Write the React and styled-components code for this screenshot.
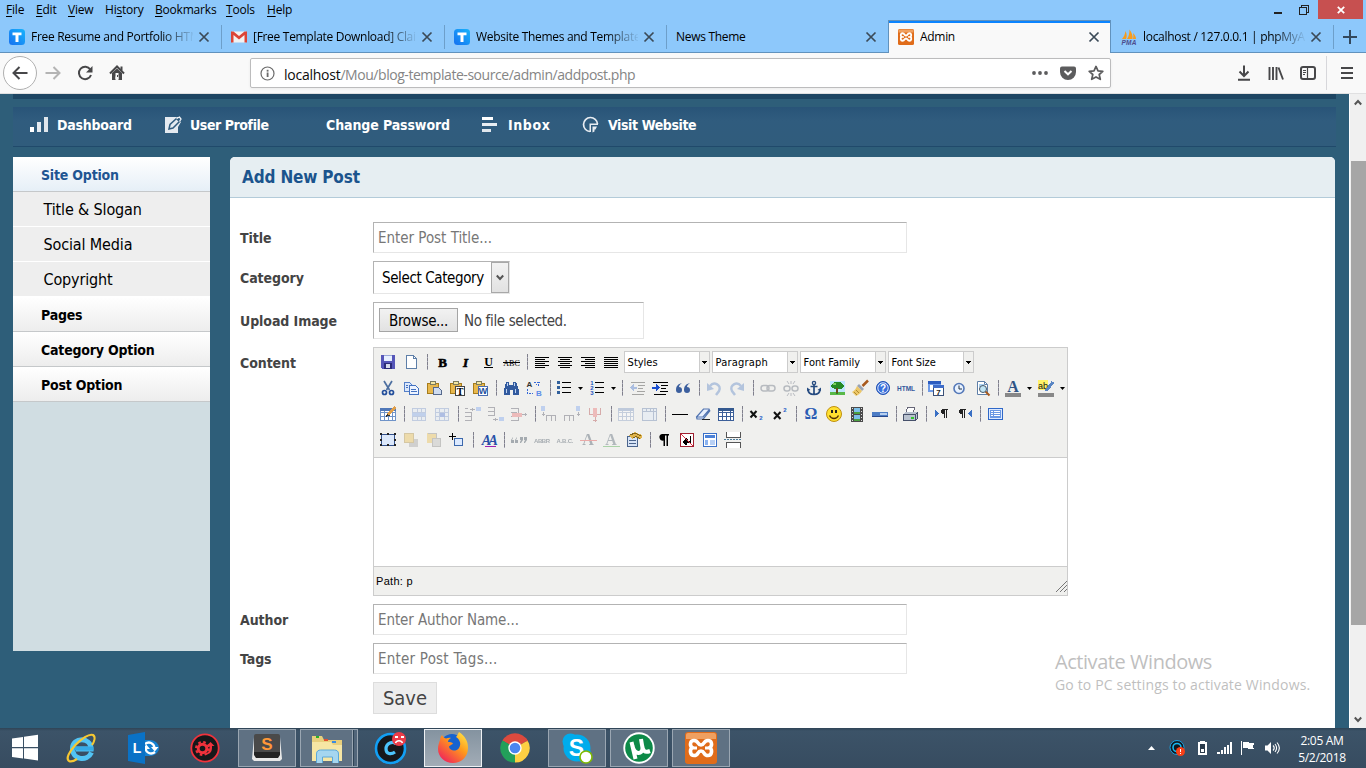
import React from "react";
import styled, { createGlobalStyle, css } from "styled-components";

const Global = createGlobalStyle`
  * { box-sizing: border-box; }
  html, body { margin: 0; padding: 0; overflow: hidden; }
  svg { display: block; flex: none; }
`;

const segoe = `"Open Sans", "Noto Sans", sans-serif`;
const tahoma = `"DejaVu Sans Condensed", "DejaVu Sans", sans-serif`;

const Text = styled.span`
  white-space: pre;
  flex: none;
  letter-spacing: ${(p) => p.$ls || 0}px;
`;

const Screen = styled.div`
  width: 1366px;
  height: 768px;
  display: flex;
  flex-direction: column;
  overflow: hidden;
  font-family: ${segoe};
  font-size: 12px;
  color: #000;
`;

/* ---------- browser chrome ---------- */

const MenuBar = styled.div`
  height: 20px;
  background: #8dc8fb;
  display: flex;
  justify-content: space-between;
  padding-left: 6px;
`;
const Menus = styled.div`
  display: flex;
  align-items: flex-start;
`;
const MenuItem = styled.span`
  width: ${(p) => p.$w}px;
  line-height: 19px;
  letter-spacing: -0.2px;
  u { text-underline-offset: 2px; }
`;
const WindowButtons = styled.div`
  display: flex;
  height: 19px;
`;
const WindowButton = styled.div`
  width: ${(p) => p.$w}px;
  height: 19px;
  display: flex;
  align-items: center;
  justify-content: center;
  background: ${(p) => p.$bg || "transparent"};
`;

const TabStrip = styled.div`
  height: 33px;
  display: flex;
  background: #8dc8fb;
  box-shadow: inset 0 -1px #6192bd;
`;
const Tab = styled.div`
  width: ${(p) => p.$w}px;
  height: 33px;
  flex: none;
  display: flex;
  align-items: center;
  padding: 1px 12px 0 ${(p) => p.$pl ?? 9}px;
  position: relative;
  ${(p) =>
    p.$active
      ? css`
          background: #f9f9f9;
          border: solid #6192bd;
          border-width: 1px 1px 0;
          box-shadow: inset 0 2px #0a84ff;
          padding-top: 0;
          padding-right: 10px;
        `
      : css`
          background: linear-gradient(#6d9fca, #6d9fca) right 5px / 1px 24px no-repeat;
          ${p.$last && "background: none; padding-right: 11px;"}
        `}
`;
const TabTitle = styled.div`
  flex: 1;
  min-width: 0;
  margin: 0 5px 1px ${(p) => (p.$icon ? 6 : 0)}px;
  overflow: hidden;
  white-space: nowrap;
  letter-spacing: ${(p) => p.$ls || 0}px;
  mask-image: ${(p) => (p.$fade ? "linear-gradient(90deg,#000 80%,transparent 101%)" : "none")};
`;
const NewTab = styled.div`
  flex: 1;
  display: flex;
  align-items: center;
  justify-content: center;
  background: linear-gradient(#6d9fca, #6d9fca) left 5px / 1px 24px no-repeat;
`;

const NavBar = styled.div`
  height: 41px;
  background: #f9f9f9;
  border-bottom: 1px solid #e0e0e1;
  display: flex;
  align-items: center;
  padding-left: 3px;
`;
const BackButton = styled.div`
  width: 34px;
  height: 34px;
  border: 1px solid #b0b0b0;
  border-radius: 50%;
  background: #fff;
  display: flex;
  align-items: center;
  justify-content: center;
`;
const NavButton = styled.div`
  width: ${(p) => p.$w || 32}px;
  display: flex;
  justify-content: center;
`;
const UrlBar = styled.div`
  width: 861px;
  height: 30px;
  margin-left: 117px;
  border: 1px solid #bcbcbd;
  border-radius: 2px;
  background: #fff;
  display: flex;
  align-items: center;
  padding: 0 6px 0 9px;
  box-shadow: 0 1px 3px rgba(0, 0, 0, 0.06);
`;
const Url = styled.div`
  flex: 1;
  margin-left: 9px;
  font-size: 14px;
  letter-spacing: -0.45px;
  color: #858585;
  padding-top: 2px;
  b { font-weight: 400; color: #0c0c0d; letter-spacing: -0.25px; }
`;
const UrlIcons = styled.div`
  display: flex;
  gap: 12px;
  align-items: center;
`;
const RightTools = styled.div`
  margin-left: 117px;
  display: flex;
  align-items: center;
`;
const MenuButton = styled.div`
  height: 34px;
  width: 40px;
  margin-left: 2px;
  border-left: 1px solid #d7d7db;
  display: flex;
  align-items: center;
  justify-content: center;
`;

/* ---------- page ---------- */

const Viewport = styled.div`
  height: 634px;
  display: flex;
  background: #2e5e79;
  font-family: ${tahoma};
`;
const Page = styled.div`
  width: 1336px;
  padding-left: 13px;
  margin-right: 13px;
  display: flex;
  flex-direction: column;
`;
const HeaderBand = styled.div`
  height: 5px;
  background: #1e4663;
`;
const SiteNav = styled.div`
  margin-top: 8px;
  height: 40px;
  background: linear-gradient(#295478, #305c7e 35%, #305c7c);
  border-bottom: 1px solid #204a6b;
  display: flex;
`;
const SiteNavItem = styled.div`
  display: flex;
  align-items: center;
  width: ${(p) => p.$w}px;
  padding: 0 0 4px ${(p) => p.$pl || 0}px;
  gap: ${(p) => p.$gap || 7}px;
  color: #fff;
  font-weight: 700;
  font-size: 14px;
`;
const Columns = styled.div`
  flex: 1;
  margin-top: 10px;
  display: flex;
  gap: 20px;
`;
const Sidebar = styled.div`
  width: 197px;
  height: 494px;
  background: #d0dde2;
`;
const SideHead = styled.div`
  height: 35px;
  padding-left: 28px;
  line-height: 36px;
  letter-spacing: -0.2px;
  font-size: 14px;
  font-weight: 700;
  color: ${(p) => (p.$open ? "#1f5592" : "#000")};
  background: linear-gradient(#fff, ${(p) => (p.$open ? "#e6eff7" : "#ededed")});
  border-bottom: 1px solid #c5c8ca;
`;
const SideLink = styled.div`
  height: 35px;
  padding-left: 30.5px;
  line-height: 35px;
  letter-spacing: -0.14px;
  font-size: 16px;
  background: #eee;
  border-bottom: 1px solid #fff;
`;
const Panel = styled.div`
  width: 1105px;
  background: #fff;
  border-radius: 5px 5px 0 0;
  overflow: hidden;
`;
const PanelTitle = styled.div`
  height: 41px;
  background: #e6eef2;
  border-bottom: 1px solid #b3cbd9;
  color: #1b548d;
  font-weight: 700;
  font-size: 17px;
  letter-spacing: -0.17px;
  line-height: 40px;
  padding-left: 12px;
`;
const Form = styled.div`
  padding: 24px 0 0 10px;
  display: flex;
  flex-direction: column;
  gap: 8px;
  color: #444;
  font-size: 15px;
`;
const Row = styled.div`
  display: flex;
  align-items: ${(p) => (p.$top ? "flex-start" : "center")};
  height: ${(p) => p.$h}px;
`;
const FieldLabel = styled.div`
  width: 133px;
  padding-top: ${(p) => (p.$top ? 8 : 1)}px;
  font-weight: 700;
  font-size: 14px;
  letter-spacing: -0.08px;
  white-space: nowrap;
`;
const Field = styled.div`
  width: ${(p) => p.$w || 534}px;
  height: 100%;
  border: 1px solid;
  border-color: #b3b3b3 #e6e6e6 #e6e6e6 #b3b3b3;
  display: flex;
  align-items: center;
  padding-left: 4px;
  color: #777;
`;
const SelectField = styled(Field)`
  padding: 0 0 0 8px;
  justify-content: space-between;
  color: #000;
`;
const SelectArrow = styled.div`
  width: 18px;
  height: 31px;
  border: 1px solid #a8a8a8;
  background: linear-gradient(#f2f2f2, #e2e2e2);
  display: flex;
  align-items: center;
  justify-content: center;
`;
const FileField = styled(Field)`
  padding-left: 5px;
  gap: 6px;
  color: #444;
`;
const Browse = styled.div`
  width: 79px;
  height: 24px;
  margin-bottom: 1px;
  padding-top: 1px;
  border: 1px solid #a5a5a5;
  background: linear-gradient(#f2f2f2, #e2e2e2);
  color: #000;
  display: flex;
  align-items: center;
  justify-content: center;
`;
const Save = styled.div`
  width: 64px;
  height: 32px;
  border: 1px solid #ddd;
  background: #eee;
  font-size: 20px;
  color: #444;
  display: flex;
  align-items: center;
  justify-content: center;
`;

/* ---------- rich text editor ---------- */

const Editor = styled.div`
  width: 695px;
  height: 249px;
  border: 1px solid #ccc;
  display: flex;
  flex-direction: column;
  color: #000;
`;
const ToolArea = styled.div`
  height: 110px;
  background: #f0f0ee;
  border-bottom: 1px solid #ccc;
  padding: 1px 0 0 3px;
`;
const ToolRow = styled.div`
  height: 26px;
  display: flex;
  align-items: center;
`;
const Tool = styled.div`
  width: ${(p) => (p.$split ? 32.5 : 23)}px;
  display: flex;
  align-items: center;
  padding-left: 1px;
  opacity: ${(p) => (p.$off ? 0.36 : 1)};
`;
const ToolSep = styled.div`
  width: 7.8px;
  height: 16px;
  padding-left: 4px;
  &::before {
    content: "";
    display: block;
    width: 1px;
    height: 16px;
    background: repeating-linear-gradient(#80808c 0 3px, #a8a8b8 3px 4px);
  }
`;
const ListBox = styled.div`
  width: 86px;
  height: 22px;
  margin: 0 1px;
  border: 1px solid #ccc;
  background: #fff;
  display: flex;
  justify-content: space-between;
  font-size: 11px;
  line-height: 21px;
  padding-left: 3px;
`;
const ListArrow = styled.div`
  width: 10px;
  background: #f0f0ee;
  border-left: 1px solid #ccc;
  display: flex;
  align-items: center;
  justify-content: center;
`;
const EditArea = styled.div`
  flex: 1;
  background: #fff;
`;
const StatusBar = styled.div`
  height: 29px;
  background: #f0f0ee;
  border-top: 1px solid #ccc;
  display: flex;
  align-items: center;
  justify-content: space-between;
  padding-left: 2px;
  font: 11px "Liberation Sans", sans-serif;
`;
const Grip = styled.div`
  align-self: flex-end;
  padding: 0 0 3px;
`;

/* ---------- scrollbar, watermark, task bar ---------- */

const Scroll = styled.div`
  width: 17px;
  background: #f0f0f0;
  display: flex;
  flex-direction: column;
  align-items: center;
  justify-content: space-between;
  border-left: 1px solid #fff;
`;
const ScrollEnd = styled.div`
  height: 17px;
  display: flex;
  align-items: center;
`;
const Thumb = styled.div`
  width: 15px;
  height: 464px;
  margin-bottom: 36px;
  background: #a6a6a6;
`;
const Watermark = styled.div`
  position: absolute;
  left: 1055px;
  top: 650px;
  color: #bfbfbf;
  display: flex;
  flex-direction: column;
  line-height: 24px;
  font-family: ${segoe};
`;
const Taskbar = styled.div`
  height: 40px;
  background: linear-gradient(#2f4456, #3c5368 3px, #374c60);
  display: flex;
  justify-content: space-between;
`;
const Apps = styled.div`
  display: flex;
`;
const AppSlot = styled.div`
  width: ${(p) => p.$w || 62}px;
  height: 40px;
  display: flex;
  align-items: center;
  justify-content: center;
`;
const AppFrame = styled.div`
  width: 58px;
  height: 38px;
  border: 1px solid ${(p) => (p.$active ? "#eef1f4" : "#9aa6b2")};
  background: ${(p) => (p.$active ? "linear-gradient(#8493a0,#a2acb6)" : "#5f7183")};
  display: flex;
  align-items: center;
  justify-content: center;
  padding-right: ${(p) => (p.$stack ? 5 : 0)}px;
  box-shadow: ${(p) => (p.$stack ? "inset -3px 0 #52667a, inset -4px 0 #2f4456, inset -5px 0 #9aa6b2" : "none")};
`;
const Tray = styled.div`
  display: flex;
  align-items: center;
  color: #fff;
`;
const TrayIcon = styled.div`
  width: ${(p) => p.$w || 24}px;
  display: flex;
  justify-content: center;
`;
const Clock = styled.div`
  width: 82px;
  display: flex;
  flex-direction: column;
  align-items: center;
  line-height: 17px;
  padding: 2px 6px 0 0;
`;

/* ---------- icons ---------- */

const Svg = ({ w = 20, h = w, vb, children, crisp }) => (
  <svg width={w} height={h} viewBox={vb || `0 0 ${w} ${h}`} fill="none" shapeRendering={crisp ? "crispEdges" : "auto"}>
    {children}
  </svg>
);
const R = (x, y, w, h, f, k) => <rect key={k} x={x} y={y} width={w} height={h} fill={f} />;
const S = (d, c = "#000", sw = 1) => <path d={d} stroke={c} strokeWidth={sw} />;
const F = (d, c = "#000") => <path d={d} fill={c} />;
const lines = (ws, xs) => ws.map((w, i) => R(xs ? xs[i] : 3, 5 + i * 2, w, 1, "#000", i));
const T = (x, y, s, size, fill, extra) => (
  <text x={x} y={y} fontSize={size} fill={fill} {...extra}>{s}</text>
);
const serif = { fontFamily: '"Liberation Serif", serif', fontWeight: 700, textAnchor: "middle" };
const sans = { fontFamily: '"Liberation Sans", sans-serif', fontWeight: 700, textAnchor: "middle" };

const clip = (
  <>
    {F("M3 5h12v11H3z", "#e8b84c")}
    {S("M3.5 5.5h11v10h-11z", "#a67c1c")}
    {F("M6 3h6v4H6z", "#f4e6a0")}
    {S("M6.5 3.5h5v3h-5z", "#7c7c60")}
  </>
);
const grid = (c = "#5b7fb5", top = "#3c66a8") => (
  <>
    {R(2, 4, 16, 13, "#fff")}
    {S("M2.5 4.500h15v12h-15zM3 8.500h15M3 12.500h15M6.500 5v12M10.500 8v9M14.500 5v12", c)}
    {R(2, 4, 16, 3, top)}
  </>
);
const sheet = (
  <>
    {F("M5 3h7l4 4v10H5z", "#fff")}
    {S("M5.500 3.500h7l3 3v10h-10zM12.500 3.500v3h3", "#5e7fa8")}
  </>
);

const icons = {
  save: <>{F("M3 3h14v14H4l-1-1z", "#5656b8")}{R(6, 3, 8, 6, "#e8f0ff")}{R(6, 3, 8, 1, "#9aa8d8")}{R(6, 11, 8, 6, "#2c2c78")}{R(8, 12, 4, 4, "#d8dcec")}</>,
  newdoc: sheet,
  bold: T(10.500, 15, "B", 13, "#000", { ...serif, stroke: "#000", strokeWidth: 0.6 }),
  italic: T(10.500, 15, "I", 13, "#000", { ...serif, fontStyle: "italic", stroke: "#000", strokeWidth: 0.6 }),
  underline: <>{T(10.500, 14, "U", 12, "#000", serif)}{R(6, 15, 9, 1, "#000")}</>,
  strike: <>{T(10.500, 13.500, "ABC", 8, "#000", { ...serif, fontWeight: 400 })}{R(2, 10, 17, 1, "#000")}</>,
  left: lines([14, 10, 14, 10, 14, 10]),
  center: lines([14, 10, 14, 10, 14, 10], [3, 5, 3, 5, 3, 5]),
  right: lines([14, 10, 14, 10, 14, 10], [3, 7, 3, 7, 3, 7]),
  full: lines([14, 14, 14, 14, 14, 14]),
  cut: <>{S("M6 3l5.500 9M14 3l-5.500 9", "#4d6fa0", 1.700)}<circle cx="6.500" cy="14.500" r="2" stroke="#234f9c" strokeWidth="1.700" /><circle cx="13.500" cy="14.500" r="2" stroke="#234f9c" strokeWidth="1.700" /></>,
  copy: <>{F("M3 4h6l3 3v7H3z", "#dce8fb")}{S("M3.500 4.500h5l3 3v6h-8z", "#5580c8")}{F("M8 7h6l4 3v7H8z", "#eef4ff")}{S("M8.500 7.500h6l3 3v6h-9zM10 11.500h5M10 13.500h6M5 7.500h2M5 9.500h2", "#4572c0")}</>,
  paste: <>{clip}{F("M9 9h5l4 3v5H9z", "#cfdcf0")}{S("M9.500 9.500h5l3 3v4h-8z", "#56698c")}</>,
  pastetext: <>{clip}{R(9, 8, 9, 10, "#fff")}{S("M8.500 8.500h9v9h-9z", "#444")}{T(13, 16.500, "T", 10, "#000", serif)}</>,
  pasteword: <>{clip}{R(9, 8, 9, 10, "#fff")}{S("M8.500 8.500h9v9h-9z", "#4a6eb0")}{T(13, 16, "W", 9, "#23509c", sans)}</>,
  search: <>{F("M5 4h3v3h4V4h3l3 8v5h-6v-5H9v5H3v-5z", "#315a9e")}{S("M5.500 11v4M14.500 11v4M6.500 5v3M13.500 5v3", "#bdd3f2")}</>,
  replace: <>{T(5.500, 9, "A", 8, "#333", sans)}{T(15, 18, "B", 8, "#5d8ce8", sans)}<path d="M10 4.500h4.500V9M3.500 11v4.500H9M12 7l5-4" stroke="#3468d8" strokeDasharray="2 1" /></>,
  bullist: <>{[3, 8, 13].map((y) => <React.Fragment key={y}>{R(3, y, 3, 3, "#31609c")}{R(8, y + 1, 9, 1, "#000")}</React.Fragment>)}</>,
  numlist: <>{[3, 8, 13].map((y, i) => <React.Fragment key={y}>{T(5, y + 4, i + 1, 6, "#1c56c0", sans)}{R(8, y + 1, 9, 1, "#000")}</React.Fragment>)}</>,
  outdent: <>{S("M4 9.500h6", "#3468c8", 2)}{F("M7 5.500l-4.500 4L7 13.500z", "#3468c8")}{S("M4 4.500h14M11 7.500h7M11 10.500h5M10 13.500h8M5 16.500h12", "#222")}</>,
  indent: <>{S("M2 9.500h5", "#1c50d0", 2)}{F("M6 6l4 3.500-4 3.500z", "#1c50d0")}{S("M3 4.500h15M11 7.500h7M11 10.500h5M10 13.500h8M4 16.500h12", "#000")}</>,
  quote: F("M9 5c-4 1-6 3-6 7 0 2 1 3 3 3s3-1 3-3-1-3-3-3c0-1 1-3 3-4zM17 5c-4 1-6 3-6 7 0 2 1 3 3 3s3-1 3-3-1-3-3-3c0-1 1-3 3-4z", "#3c5f9e"),
  undo: <>{S("M6 8c4-5 12-1 9 5l-3 4", "#4a78c0", 2.500)}{F("M3 5v8l7-2z", "#4a78c0")}</>,
  redo: <>{S("M14 8c-4-5-12-1-9 5l3 4", "#4a78c0", 2.500)}{F("M17 5v8l-7-2z", "#4a78c0")}</>,
  link: <><rect x="3" y="7.500" width="8" height="5.500" rx="2.700" stroke="#555f70" strokeWidth="1.500" /><rect x="9" y="7.500" width="8" height="5.500" rx="2.700" stroke="#555f70" strokeWidth="1.500" /></>,
  unlink: <><rect x="3" y="8" width="6" height="5" rx="2.500" stroke="#555f70" strokeWidth="1.500" /><rect x="11" y="8" width="6" height="5" rx="2.500" stroke="#555f70" strokeWidth="1.500" />{S("M10 3v3M6 3l2 3M14 3l-2 3M10 15v3M6 18l2-3M14 18l-2-3", "#555f70")}</>,
  anchor: <><circle cx="10" cy="5" r="1.600" stroke="#264b80" strokeWidth="1.400" />{S("M10 7v9M6.500 8.500h7M4 11c0 4 3 5.500 6 5.500s6-1.500 6-5.500", "#264b80", 1.700)}{F("M3 13V9.500L6.500 12zM17 13V9.500L13.500 12z", "#264b80")}</>,
  image: <>{R(3, 3, 15, 12, "#bfe6ff")}{R(3, 14, 15, 3, "#58b848")}{F("M4 7l3-3h7l3 4-3 3h-3v5H9v-5l-4-1z", "#258a25")}{R(9, 10, 2, 5, "#6b4a20")}{R(6, 5, 3, 2, "#7ad060")}</>,
  clean: <>{S("M18 2.500L12.500 8", "#a8591c", 2.500)}{F("M9 6l5 5-2 2-5-5z", "#9aa4b4")}{F("M7 8l5 5c-2 3-4 4-6 5l-4-4c2-1 4-3 5-6z", "#ecc768")}{S("M4 14l3 3M6 12l3 3", "#b08a30")}</>,
  help: <><circle cx="10" cy="10" r="6.500" fill="#3a70dc" stroke="#1f4fb0" /><circle cx="10" cy="10" r="5.200" stroke="#fff" strokeWidth=".8" />{T(10, 13.500, "?", 10, "#fff", sans)}</>,
  html: T(10, 12.500, "HTML", 6.500, "#33589c", { ...sans, textLength: 18 }),
  date: <>{R(2, 3, 13, 11, "#6f9be8")}{R(2, 3, 13, 3, "#2c5cc0")}{R(4, 7, 8, 5, "#fff")}{R(7, 7, 11, 11, "#fff")}{S("M7.500 7.500h10v10h-10z", "#3b5078")}{R(7, 7, 11, 3, "#3f6cc8")}{T(12.500, 16.500, "7", 8, "#222", sans)}</>,
  time: <><circle cx="10" cy="10.500" r="5" fill="#e8f2ff" stroke="#5478b8" strokeWidth="1.600" />{S("M10 7.500V11h3", "#234")}</>,
  preview: <>{sheet}{R(7, 6, 5, 3, "#a8d0f0")}{S("M13 13l4.500 4.500", "#a8591c", 2)}<circle cx="11" cy="11" r="3.500" fill="#bfe4f4" stroke="#456" /></>,
  forecolor: <>{T(10, 14, "A", 16, "#2f5487", serif)}{R(2, 15, 16, 4, "#888")}</>,
  backcolor: <>{R(2, 2, 10, 10, "#fff36a")}{T(7, 11, "ab", 9, "#111", { ...sans, fontWeight: 400 })}{S("M10 13l7-9", "#5a86c4", 3)}{R(2, 15, 16, 4, "#888")}</>,
  table: <>{grid("#6f93c8", "#5078b8")}{S("M17.500 3L10 10.500", "#e0a04c", 3)}{F("M8 13l1-3.500 2.500 2z", "#333")}</>,
  rowprops: <>{R(3, 4, 14, 13, "#dfe8f7")}{S("M3.500 4.500h13v12h-13zM3 8.500h14M3 12.500h14M8 5v3M12 5v3M8 13v4M12 13v4", "#6f8fc8")}{R(3, 9, 14, 3, "#6c98e8")}</>,
  cellprops: <>{R(3, 4, 14, 13, "#dfe8f7")}{S("M3.500 4.500h13v12h-13zM3 8.500h14M3 12.500h14M7.500 5v12M12.500 5v12", "#6f8fc8")}{R(8, 9, 5, 4, "#3c68d0")}</>,
  rowbefore: <>{R(13, 3, 5, 4, "#6a98f0")}{S("M7 5.500h5M9.500 4v3M2 4.500h3M2 8.500h6v8H2M2 12.500h6", "#445")}</>,
  rowafter: <>{R(13, 13, 5, 4, "#6a98f0")}{S("M7 15.500h5M9.500 14v3M2 3.500h6v8H2M2 7.500h6", "#445")}</>,
  delrow: <>{S("M2 4.500h7v12H2M2 8.500h6M2 12.500h6M12 10.500h6M16.500 9v3", "#445")}{R(3, 9, 10, 4, "#e86060")}</>,
  colbefore: <>{R(2, 2, 4, 5, "#6a98f0")}{S("M4 8v4M2.500 10.500h3M7.500 17v-6h9v6M12 11v6", "#445")}</>,
  colafter: <>{R(14, 2, 4, 5, "#6a98f0")}{S("M16 8v4M14.500 10.500h3M2.500 17v-6h9v6M7 11v6", "#445")}</>,
  delcol: <>{S("M4.500 4v6h11V4M10 13v5M8 16.500h4", "#a33")}{R(8, 4, 4, 9, "#e86060")}</>,
  split: grid("#7b93bd", "#6a88bc"),
  merge: <>{R(3, 4, 15, 13, "#dce8fa")}{S("M3.500 4.500h14v12h-14zM3 7.500h14M7.500 5v3M11.500 5v3M14.500 5v12", "#5473a6")}</>,
  hr: R(2, 10, 16, 1, "#000"),
  eraser: <>{F("M3 13l7-8h6l1 2-7 8H4z", "#e8effc")}{S("M3.500 13l7-8h5.500l.8 2-6.500 8H4z M4 13h6l6-7", "#5274b0", 1.200)}{R(9, 15, 8, 1, "#222")}</>,
  visual: grid("#3c5f99", "#34598f"),
  sub: <>{S("M3.500 7l6 6.500M9.500 7l-6 6.500", "#111", 2)}{T(14, 16, "2", 6, "#2860c8", sans)}</>,
  sup: <>{S("M4 8l6.500 7M10.500 8L4 15", "#111", 2)}{T(15, 8, "2", 6, "#2860c8", sans)}</>,
  omega: T(10, 15, "Ω", 16, "#2c5cb4", { ...serif }),
  smile: <><circle cx="10" cy="10" r="7.500" fill="#ffe030" stroke="#c09010" />{R(7, 6, 2, 3, "#222")}{R(11, 6, 2, 3, "#222")}{S("M5.500 11.500c2 4 7 4 9 0", "#553300", 1.300)}</>,
  film: <>{R(4, 3, 12, 15, "#4a4a4a")}{R(7, 4, 6, 6, "#7cc0e8")}{R(7, 11, 6, 6, "#7cc0e8")}{R(7, 8, 6, 2, "#4aa040")}{R(7, 15, 6, 2, "#4aa040")}<path d="M5.500 4v14M14.500 4v14" stroke="#ddd" strokeDasharray="1 2" /></>,
  advhr: <>{R(2, 8, 16, 4, "#4c7cc4")}{R(10, 9, 7, 2, "#b8d0f0")}{R(2, 12, 16, 1, "#28488c")}</>,
  print: <>{F("M7 3h8l-1 6H5z", "#fff")}{S("M7.500 3.500h7l-1 6h-8z", "#667")}{F("M3 10l3-2h10l2 1v6l-3 2H3z", "#b9c2cf")}{S("M3.500 10.500h12v6h-12zM15.500 10.500l2-2v6l-2 2", "#46506a")}{R(11, 13, 3, 2, "#2fc42f")}</>,
  ltr: <>{F("M4 6l4 3.500-4 3.500z", "#3a70c4")}{F("M11 5h6v1h-1v8h-1V6h-1v8h-1v-4a2.500 2.500 0 01-1-5z", "#222")}</>,
  rtl: <>{F("M18 6l-4 3.500 4 3.500z", "#3a70c4")}{F("M6 5h6v1h-1v8h-1V6H9v8H8v-4a2.500 2.500 0 01-1-5z", "#222")}</>,
  fullscreen: <>{R(3, 4, 15, 12, "#2f68c8")}{R(4, 5, 13, 10, "#dce9ff")}{R(5, 6, 11, 8, "#6a98e4")}{S("M6 7.500h2M9 7.500h6M6 9.500h2M9 9.500h6M6 11.500h2M9 11.500h6", "#fff")}</>,
  layer: <>{R(4, 5, 13, 11, "#dce8fa")}{S("M3.500 4.500h13v11h-13z", "#31508c")}{[[2, 3], [9, 3], [16, 3], [2, 14], [9, 14], [16, 14], [2, 9], [16, 9]].map(([x, y]) => R(x, y, 2, 2, "#222", `${x}-${y}`))}</>,
  forward: <>{R(8, 9, 9, 8, "#999")}{F("M3 3h10v10H3z", "#e8b838")}{S("M3.500 3.500h9v9h-9z", "#a88020")}</>,
  backward: <>{F("M3 3h10v10H3z", "#e8b838")}{R(8, 8, 9, 9, "#b4b4b4")}{S("M8.500 8.500h8v8h-8zM3.500 3.500h9v4", "#777")}</>,
  abslayer: <>{S("M2 6.500h7M5.500 3v7", "#000")}{R(7, 8, 9, 8, "#dceaff")}{S("M7.500 8.500h8v7h-8z", "#3c68ac", 1.500)}</>,
  style: <>{T(10.500, 15, "AA", 14, "#2850a8", { ...serif, fontStyle: "italic", letterSpacing: -2.500 })}{R(7, 16, 11, 1, "#a020b0")}</>,
  cite: [2, 6, 11, 15].map((x, i) => <React.Fragment key={x}>{F(i < 2 ? `M${x + 2} 7v1l-1 2h2v3h-3V10z` : `M${x} 7h3v3l-2 3h-1v-1l1-2h-1z`, "#234")}</React.Fragment>),
  abbr: T(10, 13, "ABBR", 6, "#234", { ...sans, textLength: 16 }),
  acronym: T(10, 13, "A.B.C.", 6, "#234", { ...sans, textLength: 17 }),
  del: <>{T(10, 15, "A", 16, "#345", serif)}{R(2, 10, 17, 1, "#e03030")}</>,
  ins: <>{T(10, 15, "A", 16, "#456", serif)}{R(2, 16, 17, 1, "#30a030")}</>,
  attribs: <>{R(3, 6, 11, 11, "#d8e4f6")}{S("M3.500 6.500h10v10h-10zM5 10.500h7M5 13.500h7", "#4a648c")}{F("M5 5l6-3 7 3v3l-3 1-4-2-3 2z", "#e0b44c")}{S("M6 5l5-2 6 3M9 8l3-1.500 4 2", "#80641c")}</>,
  visualchars: F("M8 4h7v1.500h-1V16h-1.500V5.500h-1.500V16H9.500v-5.500A3.200 3.200 0 018 4z"),
  nonbreaking: <>{R(3, 3, 14, 14, "#fff")}{S("M3.500 3.500h13v13h-13z", "#a02030", 1.500)}{S("M13.500 6v6H8M10 9l-3 3 3 3", "#000", 1.500)}{S("M4 4l12 12", "#e03040", 1.200)}</>,
  template: <>{R(3, 3, 14, 14, "#fff")}{S("M3.500 3.500h13v13h-13z", "#3a70c8", 1.200)}{R(5, 5, 10, 3, "#4c82d8")}{R(5, 10, 3, 5, "#8cb4f0")}{R(10, 10, 5, 5, "#b8d0f4")}</>,
  pagebreak: <>{R(4, 2, 13, 5, "#fff")}{R(4, 13, 13, 5, "#fff")}{S("M3.500 2v5.500h14V2M3.500 18v-5.500h14V18", "#555")}<path d="M1 9.500h18" stroke="#4a7c9c" strokeDasharray="2 1" /></>,
};

const smooth = new Set(["bold", "italic", "cut", "help", "smile", "time", "undo", "redo", "quote", "link", "unlink", "anchor", "clean", "eraser", "preview", "omega", "sub", "sup", "visualchars", "cite"]);

const Down = ({ w = 5, c = "#000" }) => (
  <Svg w={w} h={3} vb="0 0 5 3" crisp>{F("M0 0h5L2.500 3z", c)}</Svg>
);

/* "|" is a separator, "!" a disabled tool, "+" a tool with a drop-down arrow */
const toolRows = [
  "save newdoc | bold italic underline strike | left center right full",
  "cut copy paste pastetext pasteword | search replace | +bullist +numlist | !outdent indent quote | !undo !redo | !link !unlink anchor image clean help html | date time preview | +forecolor +backcolor",
  "table | !rowprops !cellprops | !rowbefore !rowafter !delrow | !colbefore !colafter !delcol | !split !merge | hr eraser visual | sub sup | omega smile film advhr | print | ltr rtl | fullscreen",
  "layer !forward !backward abslayer | style | !cite !abbr !acronym !del !ins attribs | visualchars nonbreaking template pagebreak",
];

const Toolbar = ({ tools, children }) => (
  <ToolRow>
    {tools.split(" ").map((t, i) => {
      if (t === "|") return <ToolSep key={i} />;
      const name = t.replace(/[!+]/, "");
      return (
        <Tool key={i} $off={t[0] === "!"} $split={t[0] === "+"}>
          <Svg w={20} crisp={!smooth.has(name)}>{icons[name]}</Svg>
          {t[0] === "+" && <Svg w={10} h={3}>{F("M4 0h5L6.500 3z")}</Svg>}
        </Tool>
      );
    })}
    {children}
  </ToolRow>
);

const Close = ({ c = "#3b4a57" }) => (
  <Svg w={12}>{S("M1.500 1.500l9 9M10.500 1.500l-9 9", c, 1.700)}</Svg>
);
const TIcon = () => (
  <Svg w={16}>
    <defs><linearGradient id="tg" x1="0" y1="1" x2="1" y2="0"><stop stopColor="#1670f0" /><stop offset="1" stopColor="#18b4fc" /></linearGradient></defs>
    <rect width="16" height="16" rx="3.500" fill="url(#tg)" />
    {F("M3.500 3.500h9v2.700H9.500V13h-3V6.200h-3z", "#fff")}
  </Svg>
);
const Gmail = () => (
  <Svg w={16}>
    {F("M1 2.500h14v11H1z", "#f2f2f2")}
    {F("M1 2.500h1.500L8 7l5.500-4.500H16v11h-2.500V6L8 10.500 2.500 6v7.500H0v-11z", "#db4437")}
  </Svg>
);
const Xampp = ({ s = 16 }) => (
  <Svg w={s} vb="0 0 32 32">
    <rect width="32" height="32" rx="3" fill="#e06c1a" />
    {F("M1 3a2 2 0 012-2h26a2 2 0 012 2v4H1z", "#f0a060")}
    <path d="M9 8.500c5 0 3 4.500 7 4.500s2-4.500 7-4.500c4 0 4.500 5 2 7 2.500 2.500 2 8-2 8-5 0-3-4.500-7-4.500s-2 4.500-7 4.500c-4 0-4.500-5.500-2-8-2.500-2-2-7 2-7z" stroke="#fff" strokeWidth="3.600" />
    {S("M7 16h5M20 16h5", "#fff", 3)}
  </Svg>
);
const Pma = () => (
  <Svg w={16}>
    {F("M1 10C3 8 4 5 4.500 2 6 5 6 8 5 10zM6 10c2-3 2.500-6 2.500-9.500C11 4 12 7 11.500 10zM12 10c.5-2 .5-4 0-6 2 2 3 4 3 6z", "#f89c1c")}
    {T(8, 16, "PMA", 6.500, "#4c4c8c", { ...sans, fontStyle: "italic", textLength: 15 })}
  </Svg>
);

const tabs = [
  { w: 222, t: "Free Resume and Portfolio HTML", ic: <TIcon />, fade: 1 },
  { w: 223, t: "[Free Template Download] Clairo", ic: <Gmail />, fade: 1 },
  { w: 222, t: "Website Themes and Templates", ic: <TIcon />, fade: 1 },
  { w: 221, t: "News Theme", last: 1 },
  { w: 223, t: "Admin", ic: <Xampp />, active: 1 },
  { w: 222, t: "localhost / 127.0.0.1 | phpMyAdmin", ic: <Pma />, fade: 1, last: 1 },
];

const gray = "#474749";

const Browser = () => (
  <>
    <MenuBar>
      <Menus>
        {[["File", 30], ["Edit", 32], ["View", 37], ["History", 50, 2], ["Bookmarks", 71], ["Tools", 41], ["Help", 40]].map(([m, w, i = 0]) => (
          <MenuItem key={m} $w={w}>{m.slice(0, i)}<u>{m[i]}</u>{m.slice(i + 1)}</MenuItem>
        ))}
      </Menus>
      <WindowButtons>
        <WindowButton $w={26}><Svg w={8} h={10} crisp>{R(0, 7, 8, 2, "#222")}</Svg></WindowButton>
        <WindowButton $w={27}><Svg w={12} h={10} crisp>{S("M.5 2.500h7v7h-7zM2.500 2V.5h7v7H8", "#222")}</Svg></WindowButton>
        <WindowButton $w={45} $bg="#c75050"><Svg w={8}>{S("M.8.8l6.400 6.400M7.200.8L.8 7.200", "#fff", 1.800)}</Svg></WindowButton>
        <WindowButton $w={3} />
      </WindowButtons>
    </MenuBar>
    <TabStrip>
      {tabs.map((t) => (
        <Tab key={t.t} $w={t.w} $active={t.active} $last={t.last} $pl={t.ic ? (t.fade && t.last ? 10 : 9) : 9}>
          {t.ic}
          <TabTitle $icon={!!t.ic} $fade={t.fade} $ls={-0.3}>{t.t}</TabTitle>
          <Close />
        </Tab>
      ))}
      <NewTab><Svg w={14} crisp>{S("M7 0v14M0 7h14", "#33485c", 2)}</Svg></NewTab>
    </TabStrip>
    <NavBar>
      <BackButton><Svg w={16}>{S("M15.500 8H1.500M7.500 2L1.500 8l6 6", gray, 2)}</Svg></BackButton>
      <NavButton><Svg w={16}>{S("M.5 8h14M8.500 2l6 6-6 6", "#b4b4b4", 2)}</Svg></NavButton>
      <NavButton>
        <Svg w={16}>{S("M13.300 4.500A6.200 6.200 0 1014 10", gray, 2)}{F("M15.500 1v6.500H9z", gray)}</Svg>
      </NavButton>
      <NavButton>
        <Svg w={16}>{S("M1 8.500L8 1.500l7 7", gray, 2)}{F("M3 8l5-4.500L13 8v7H9.500v-3.500h-3V15H3z", gray)}{R(6.500, 8, 3, 6, "#f9f9f9")}{R(8, 10, 1, 2, gray)}{R(11.500, 1.500, 2, 4, gray)}</Svg>
      </NavButton>
      <UrlBar>
        <Svg w={15}><circle cx="7.500" cy="7.500" r="6.500" stroke="#6b6b6b" strokeWidth="1.200" />{R(6.700, 6.500, 1.800, 4.500, "#6b6b6b")}{R(6.700, 3.800, 1.800, 1.800, "#6b6b6b")}</Svg>
        <Url><b>localhost</b>/Mou/blog-template-source/admin/addpost.php</Url>
        <UrlIcons>
          <Svg w={16}>{[2, 8, 14].map((x) => <circle key={x} cx={x} cy="8" r="1.900" fill="#5c5c5d" />)}</Svg>
          <Svg w={16}>{F("M2 1.500h12a2 2 0 012 2V7a8 8 0 01-16 0V3.500a2 2 0 012-2z", "#5c5c5d")}{S("M4.500 6L8 9.300 11.500 6", "#fff", 2)}</Svg>
          <Svg w={16}><path d="M8 1.400l2 4.400 4.800.5-3.600 3.200 1.100 4.800L8 11.900l-4.300 2.400 1.100-4.800L1.200 6.300 6 5.800z" stroke="#5c5c5d" strokeWidth="1.700" strokeLinejoin="round" /></Svg>
        </UrlIcons>
      </UrlBar>
      <RightTools>
        <NavButton><Svg w={16}>{S("M8 .5v10M3.500 6.500L8 11l4.500-4.500M2 14.800h12", gray, 2)}</Svg></NavButton>
        <NavButton><Svg w={16}>{S("M1.500 2v13M5 2v13M8.500 2v13M10.500 2.500l4.500 12", gray, 1.900)}</Svg></NavButton>
        <NavButton><Svg w={16}><rect x="1" y="2" width="14" height="12" rx="2" stroke={gray} strokeWidth="2" />{S("M7.500 2v12", gray, 1.200)}{S("M3 5.500h3M3 7.500h3M3 9.500h2", gray)}</Svg></NavButton>
        <MenuButton><Svg w={12} crisp>{S("M0 1h12M0 6h12M0 11h12", gray, 2)}</Svg></MenuButton>
      </RightTools>
    </NavBar>
  </>
);

const NavIcons = {
  bars: <Svg w={18} h={17} crisp>{R(0, 11, 4, 5, "#fff")}{R(7, 6, 4, 10, "#e4eaf0")}{R(14, 1, 4, 15, "#dfe6ec")}</Svg>,
  edit: (
    <Svg w={18}>
      {F("M1 1h13v3l3 2-3 5v6H1z", "#e4eaf0")}
      {S("M14 0l4 5", "#305c7e", 2)}
      {S("M5 13l1-4.500L12.500 2.500l3 3L9 12l-4 1z", "#305c7e", 1.500)}
      {S("M12.500 2.500L15.500 1l1.500 2-1.500 2.500", "#f2f5f8", 1.300)}
    </Svg>
  ),
  list: <Svg w={16} h={17} crisp>{R(0, 1, 11, 3, "#fff")}{R(0, 7, 15, 3, "#e8edf2")}{R(0, 13, 9, 3, "#dfe6ec")}</Svg>,
  globe: <Svg w={17}><path d="M8 15.500A7 7 0 1115.500 8" stroke="#e8edf2" strokeWidth="1.700" />{F("M7.500 7.500H16V9H9v7H7.500z", "#e8edf2")}{F("M10.500 10.500H15l-1.500 3h-1v2l-2 1z", "#e8edf2")}</Svg>,
};

const Chevron = ({ up }) => (
  <Svg w={8} h={7}>{S(up ? "M.8 5.500L4 2l3.200 3.500" : "M.8 1.500L4 5l3.200-3.500", "#555", 2)}</Svg>
);

const AdminPage = () => (
  <Viewport>
    <Page>
      <HeaderBand />
      <SiteNav>
        <SiteNavItem $w={134} $pl={17} $gap={9}>{NavIcons.bars}<Text $ls={-0.22}>Dashboard</Text></SiteNavItem>
        <SiteNavItem $w={179} $pl={17} $gap={8}>{NavIcons.edit}<Text $ls={-0.42}>User Profile</Text></SiteNavItem>
        <SiteNavItem $w={156}><Text $ls={-0.1}>Change Password</Text></SiteNavItem>
        <SiteNavItem $w={100} $gap={10}>{NavIcons.list}<Text $ls={0.6}>Inbox</Text></SiteNavItem>
        <SiteNavItem $w={140} $gap={9}>{NavIcons.globe}<Text $ls={-0.4}>Visit Website</Text></SiteNavItem>
      </SiteNav>
      <Columns>
        <Sidebar>
          <SideHead $open>Site Option</SideHead>
          <SideLink>Title &amp; Slogan</SideLink>
          <SideLink>Social Media</SideLink>
          <SideLink>Copyright</SideLink>
          <SideHead>Pages</SideHead>
          <SideHead>Category Option</SideHead>
          <SideHead>Post Option</SideHead>
        </Sidebar>
        <Panel>
          <PanelTitle>Add New Post</PanelTitle>
          <Form>
            <Row $h={31}><FieldLabel>Title</FieldLabel><Field><Text $ls={-0.03}>Enter Post Title...</Text></Field></Row>
            <Row $h={33}>
              <FieldLabel>Category</FieldLabel>
              <SelectField $w={137}><Text $ls={-0.38}>Select Category</Text><SelectArrow><Chevron /></SelectArrow></SelectField>
            </Row>
            <Row $h={37}>
              <FieldLabel>Upload Image</FieldLabel>
              <FileField $w={271}><Browse><Text $ls={-0.35}>Browse...</Text></Browse><Text $ls={-0.35}>No file selected.</Text></FileField>
            </Row>
            <Row $h={249} $top>
              <FieldLabel $top>Content</FieldLabel>
              <Editor>
                <ToolArea>
                  {toolRows.map((r, i) => (
                    <Toolbar key={i} tools={r}>
                      {i === 0 && [["Styles", 0], ["Paragraph", 0.2], ["Font Family", 0], ["Font Size", -0.1]].map(([l, ls]) => (
                        <ListBox key={l}><Text $ls={ls}>{l}</Text><ListArrow><Down /></ListArrow></ListBox>
                      ))}
                    </Toolbar>
                  ))}
                </ToolArea>
                <EditArea />
                <StatusBar>
                  <Text $ls={0.3}>Path: p</Text>
                  <Grip><Svg w={11}>{S("M0 11L11 0M4 11l7-7M8 11l3-3", "#777")}</Svg></Grip>
                </StatusBar>
              </Editor>
            </Row>
            <Row $h={31}><FieldLabel>Author</FieldLabel><Field><Text $ls={-0.1}>Enter Author Name...</Text></Field></Row>
            <Row $h={31}><FieldLabel>Tags</FieldLabel><Field><Text $ls={0.22}>Enter Post Tags...</Text></Field></Row>
            <Row $h={32}><FieldLabel /><Save><Text>Save</Text></Save></Row>
          </Form>
        </Panel>
      </Columns>
    </Page>
    <Scroll>
      <ScrollEnd><Chevron up /></ScrollEnd>
      <Thumb />
      <ScrollEnd><Chevron /></ScrollEnd>
    </Scroll>
  </Viewport>
);

const app = {
  win: <Svg w={28}>{F("M1 4.500l11-1.600V13H1zM13 2.700L27 .8V13H13zM1 14.200h11v10.300L1 23zM13 14.200h14v12.200l-14-1.900z", "#fff")}</Svg>,
  ie: <Svg w={32}><path d="M26.500 20.500C22 30 7.500 28 7.500 16.500 7.500 5 26 4.500 26 17H11" stroke="#52c4f4" strokeWidth="5" />{F("M9 14.500h19.500v4H9z", "#35aae6")}<path d="M4 29C-3 24 20 0 28 3c3 2 1 7-1 10M4 29c2 1 5 0 8-2" stroke="#f7c832" strokeWidth="2.200" /></Svg>,
  lync: (
    <Svg w={32}>
      {F("M17 8h6c5 0 9 4 9 8s-4 8-9 8h-6z", "#1580d0")}
      <path d="M18 12c4-3 9-1 9.500 4M28 20c-4 3-9 1-9.500-4" stroke="#fff" strokeWidth="2.400" />
      {F("M24 15h7.500l-3.700 4.500zM15.500 17h7.500l-3.700-4.500z", "#fff")}
      {F("M1 3l17-3v32L1 29z", "#0a72c6")}
      {T(10, 21, "L", 14, "#fff", sans)}
    </Svg>
  ),
  gear: <Svg w={30}><circle cx="15" cy="15" r="13.700" fill="#16181a" stroke="#f0323c" strokeWidth="1.800" /><circle cx="12.500" cy="15.500" r="4.300" stroke="#f0323c" strokeWidth="3" /><circle cx="12.500" cy="15.500" r="6.500" stroke="#f0323c" strokeWidth="2" strokeDasharray="2.600 2.500" />{F("M14 21c5-1 6-4 5.500-8h-3L20.500 9l4 4H22c.5 7-3 9-8 8z", "#f0323c")}</Svg>,
  sublime: <Svg w={32}>{F("M3 5h26l2 22-2 2H3l-2-2z", "#e8e8e8")}{F("M5 2h22a2 2 0 012 2v16a2 2 0 01-2 2H5a2 2 0 01-2-2V4a2 2 0 012-2z", "#4a4a4a")}{F("M3 20h26v3l-2 3H5l-2-3z", "#242424")}{T(16, 17.500, "S", 17, "#ff9838", sans)}</Svg>,
  explorer: <Svg w={34} h={32}>{F("M2 4h10l2 4h18v20H2z", "#e8cf7c")}{R(6, 4, 3, 2, "#28b028")}{R(14, 7, 4, 2, "#e05030")}{R(22, 9, 4, 2, "#3c8ce0")}{F("M2 10h19l2 3h9v16H2z", "#f6e6a4")}{F("M6 22c0-3 2-4 4-4h15c2 0 4 1 4 4v9h-6v-6H12v6H6z", "#a5d6f0")}{S("M6.500 31v-9c0-3 2-4 4-4h14c2 0 4 1 4 4v9M12.500 31v-6h10v6", "#5ca8d8")}</Svg>,
  cc: <Svg w={34}><circle cx="16.500" cy="17.500" r="14.500" fill="#16181c" stroke="#129ff4" strokeWidth="2.600" /><path d="M22 13c-3-3.500-10-1-10 5 0 5 5 6 9 3" stroke="#4cc4fc" strokeWidth="3.200" /><circle cx="25" cy="8" r="7" fill="#ec3c48" />{R(21, 5, 3, 2, "#fff")}{R(27, 5, 3, 2, "#fff")}{S("M21.500 12c1-3 6-3 7 0", "#fff", 1.400)}</Svg>,
  firefox: (
    <Svg w={32}>
      <defs><linearGradient id="ff" x1="1" y1="0" x2="0.2" y2="1"><stop stopColor="#fff04c" /><stop offset=".45" stopColor="#ff9a1c" /><stop offset="1" stopColor="#f0205c" /></linearGradient></defs>
      <circle cx="15" cy="14" r="12" fill="#1763d0" />
      {F("M3 8c0-2 1-4 2-5 1 2 2 3 4 3.500 2-1 4-1 5-.5-2 1-3 2-3 4 2 0 4 0 5 1.500-1 1.500-4 2-4 3.500 1 4 7 5 10 1 3-5 0-9-3-11C21 3 21 1 22 0c6 4 9 9 9 16 0 9-7 15-15 15S1 25 1 17c0-4 1-6 2-9z", "url(#ff)")}
    </Svg>
  ),
  chrome: <Svg w={30}>{F("M15 15L2.400 7.500A14.600 14.600 0 0127.600 7.500z", "#dc4a3e")}{F("M15 15L2.400 7.500A14.600 14.600 0 0015 29.600z", "#23a05a")}{F("M15 15l12.600-7.500A14.600 14.600 0 0115 29.600z", "#fdd043")}{F("M2.400 7.500L9 19l6-4z", "#23a05a")}{F("M15 8.300h13a15 15 0 00-2-3L14 6z", "#dc4a3e")}<circle cx="15" cy="15" r="6.700" fill="#fff" /><circle cx="15" cy="15" r="5.300" fill="#4a86f0" /></Svg>,
  skype: <Svg w={32}><circle cx="16" cy="16" r="13.500" fill="#00acec" /><circle cx="9.500" cy="9.500" r="8" fill="#00acec" /><circle cx="22" cy="22" r="8" fill="#00acec" />{T(15.500, 24, "S", 23, "#fff", sans)}<circle cx="25" cy="25" r="6" fill="#fff" stroke="#7fba00" strokeWidth="1.600" /></Svg>,
  utorrent: <Svg w={32}><circle cx="16" cy="16" r="15.700" fill="#fff" /><circle cx="16" cy="16" r="13.800" fill="#0d8a48" /><path d="M8.500 10l4 17M9.500 14c2 9 10 9 10 2L18 7M19 13c1 6 2.500 8 8 6" stroke="#fff" strokeWidth="4" /></Svg>,
  xampp: <Xampp s={32} />,
};

const TaskbarView = () => (
  <Taskbar>
    <Apps>
      <AppSlot $w={50}>{app.win}</AppSlot>
      <AppSlot>{app.ie}</AppSlot>
      <AppSlot>{app.lync}</AppSlot>
      <AppSlot>{app.gear}</AppSlot>
      <AppSlot><AppFrame>{app.sublime}</AppFrame></AppSlot>
      <AppSlot><AppFrame $stack>{app.explorer}</AppFrame></AppSlot>
      <AppSlot>{app.cc}</AppSlot>
      <AppSlot><AppFrame $active>{app.firefox}</AppFrame></AppSlot>
      <AppSlot>{app.chrome}</AppSlot>
      <AppSlot><AppFrame>{app.skype}</AppFrame></AppSlot>
      <AppSlot><AppFrame>{app.utorrent}</AppFrame></AppSlot>
      <AppSlot><AppFrame>{app.xampp}</AppFrame></AppSlot>
    </Apps>
    <Tray>
      <TrayIcon $w={26}><Svg w={7} h={4}>{F("M3.500 0L7 4H0z", "#fff")}</Svg></TrayIcon>
      <TrayIcon $w={26}><Svg w={16}><circle cx="8" cy="7.500" r="7" fill="#101820" stroke="#18a0e0" /><circle cx="8" cy="7.500" r="4" stroke="#18b8f0" strokeWidth="1.600" /><circle cx="11.500" cy="11.500" r="4.500" fill="#f84018" />{R(11, 9, 1, 3, "#fff")}{R(11, 13, 1, 1, "#fff")}</Svg></TrayIcon>
      <TrayIcon $w={24}><Svg w={16} crisp>{R(4, 2, 9, 13, "#fff")}{R(6, 1, 5, 1, "#fff")}{R(6, 4, 5, 9, "#2b3b4b")}{R(7, 9, 3, 3, "#fff")}</Svg></TrayIcon>
      <TrayIcon $w={22}><Svg w={16} crisp>{[0, 1, 2, 3, 4].map((i) => R(1 + i * 3, 12 - i * 2.400, 2, 2 + i * 2.400, "#fff", i))}{R(0, 12, 2, 2, "#fff")}</Svg></TrayIcon>
      <TrayIcon><Svg w={16} crisp>{R(1, 1, 1, 14, "#fff")}{F("M3 2h6v1h5v1l-1 2 1 3H8V8H3z", "#fff")}</Svg></TrayIcon>
      <TrayIcon><Svg w={16}>{F("M1 5.500h2.500L7 2v12l-3.500-3.500H1z", "#fff")}{S("M9 5.500c1.500 1.500 1.500 3.500 0 5M11 4c2 2.500 2 5.500 0 8M13 2.500c3 3.500 3 7.500 0 11", "#fff", 1.100)}</Svg></TrayIcon>
      <Clock><Text $ls={-0.3}>2:05 AM</Text><Text $ls={-0.3}>5/2/2018</Text></Clock>
    </Tray>
  </Taskbar>
);

const BigText = styled(Text)`font-size: 20px;`;
const MidText = styled(Text)`font-size: 14px; line-height: 21px;`;

export default function App() {
  return (
    <Screen>
      <Global />
      <Browser />
      <AdminPage />
      <Watermark>
        <BigText $ls={-0.45}>Activate Windows</BigText>
        <MidText $ls={0.16}>Go to PC settings to activate Windows.</MidText>
      </Watermark>
      <TaskbarView />
    </Screen>
  );
}
